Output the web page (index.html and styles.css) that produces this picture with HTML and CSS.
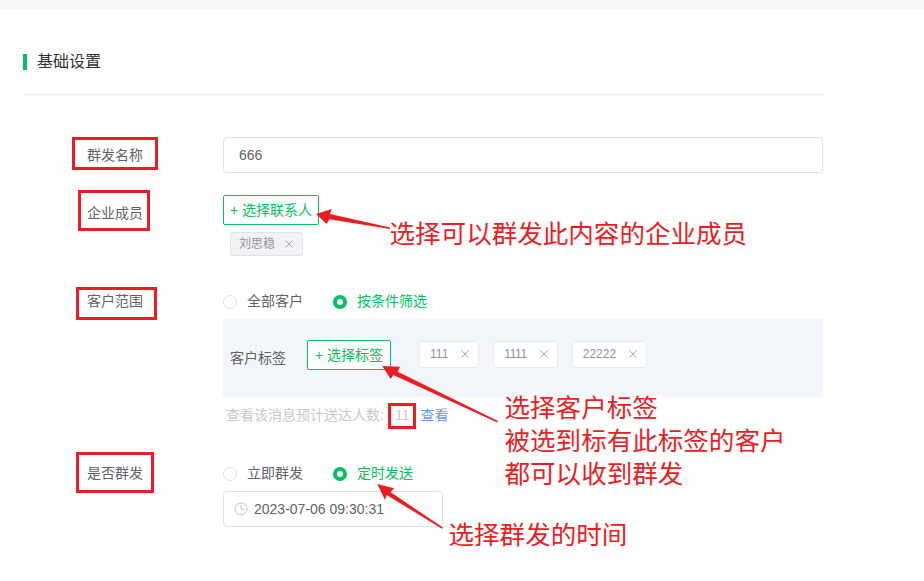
FILE: index.html
```html
<!DOCTYPE html>
<html lang="zh-CN">
<head>
<meta charset="utf-8">
<title>基础设置</title>
<link rel="stylesheet" href="styles.css">
</head>
<body>
<div class="topbar"></div>
<main class="card">
  <h2 class="section-title"><span class="section-text">基础设置</span></h2>
  <form class="form">
    <div class="row">
      <div class="label">群发名称</div>
      <div class="field"><div class="input">666</div></div>
    </div>
    <div class="row row-members">
      <div class="label">企业成员</div>
      <div class="field">
        <button type="button" class="add-btn add-contact">+ 选择联系人</button>
        <div class="member-list">
          <span class="tag tag-member">刘思稳<svg class="close" viewBox="0 0 14 14"><path d="M3.5 3.5l7 7M10.5 3.5l-7 7"/></svg></span>
        </div>
      </div>
    </div>
    <div class="row row-range">
      <div class="label">客户范围</div>
      <div class="field">
        <div class="radios">
          <span class="radio"><i class="dot"></i>全部客户</span>
          <span class="radio on"><i class="dot"></i>按条件筛选</span>
        </div>
        <div class="panel">
          <div class="panel-label">客户标签</div>
          <button type="button" class="add-btn">+ 选择标签</button>
          <div class="tags">
            <span class="tag">111<svg class="close" viewBox="0 0 14 14"><path d="M3.5 3.5l7 7M10.5 3.5l-7 7"/></svg></span>
            <span class="tag tag-tight">1111<svg class="close" viewBox="0 0 14 14"><path d="M3.5 3.5l7 7M10.5 3.5l-7 7"/></svg></span>
            <span class="tag">22222<svg class="close" viewBox="0 0 14 14"><path d="M3.5 3.5l7 7M10.5 3.5l-7 7"/></svg></span>
          </div>
        </div>
        <div class="note">查看该消息预计送达人数:<span class="count">11</span><a class="view">查看</a></div>
      </div>
    </div>
    <div class="row row-send">
      <div class="label">是否群发</div>
      <div class="field">
        <div class="radios">
          <span class="radio"><i class="dot"></i>立即群发</span>
          <span class="radio on"><i class="dot"></i>定时发送</span>
        </div>
        <div class="date">
          <svg class="clock" viewBox="0 0 14 14"><circle cx="7" cy="7" r="6"/><path d="M7 3.2V7.4H10.4"/></svg>2023-07-06 09:30:31
        </div>
      </div>
    </div>
  </form>
</main>

<div class="mark mark-name"></div>
<div class="mark mark-member"></div>
<div class="mark mark-range"></div>
<div class="mark mark-send"></div>
<div class="mark mark-count"></div>

<svg class="arrows" viewBox="0 0 924 581">
  <polygon points="316,214 331.7,209 330,214 390,227.5 390,229 329.3,219.3 326.7,224"/>
  <polygon points="382.3,366 400,366.7 397.7,371.7 498,421 497.3,422.4 393.3,375 390.7,379"/>
  <polygon points="377.3,484 394,488.3 390.7,492.3 443,527.6 442,528.8 386.7,495 385,500"/>
</svg>

<p class="note-red note-member">选择可以群发此内容的企业成员</p>
<p class="note-red note-tag">选择客户标签<br>被选到标有此标签的客户<br>都可以收到群发</p>
<p class="note-red note-time">选择群发的时间</p>
</body>
</html>
```

FILE: styles.css
```css
* { box-sizing: border-box; }
html, body { margin: 0; padding: 0; }
body {
  position: relative;
  width: 924px;
  height: 581px;
  overflow: hidden;
  background: #fff;
  color: #606266;
  font: 14px/20px "Liberation Sans", "Noto Sans CJK SC", sans-serif;
}
.topbar { height: 9px; background: #f7f8fa; }
.card { width: 800px; margin-left: 23px; }
.section-title {
  margin: 45px 0 0;
  padding-bottom: 24px;
  border-bottom: 1px solid #ebedf0;
  font-size: 16px;
  font-weight: 400;
  line-height: 16px;
  color: #323233;
}
.section-text { display: block; padding-left: 10px; border-left: 4px solid #07c160; }
.form { margin-top: 42px; }
.row { display: grid; grid-template-columns: 200px 600px; }
.row-members { margin-top: 22px; }
.row-range { margin-top: 28px; }
.row-send { margin-top: 23px; }
.label { padding-left: 64px; line-height: 36px; }
.row-range .label, .row-send .label { line-height: 34px; }
.input {
  height: 36px;
  padding-left: 15px;
  border: 1px solid #dfe1e8;
  border-radius: 4px;
  line-height: 34px;
}
.add-btn {
  display: block;
  height: 30px;
  padding: 0 7px;
  border: 1px solid #07c160;
  border-radius: 2px;
  background: #fff;
  color: #07c160;
  font: inherit;
  line-height: 28px;
}
.add-contact { padding: 0 6px; }
.member-list { margin: 7px 0 0 7px; display: flex; }
.tag {
  display: flex;
  align-items: center;
  height: 27px;
  padding: 0 6px 2px 10px;
  border: 1px solid #e9ebf0;
  border-radius: 3px;
  background: #fff;
  color: #909399;
  font-size: 12px;
}
.tag-tight { letter-spacing: -0.4px; }
.tag-member {
  height: 24px;
  padding: 0 6px 0 8px;
  background: #f2f3f5;
  border-color: #e1e3e8;
}
.close { width: 14px; height: 14px; margin-left: 10px; }
.close path { fill: none; stroke: #a4a7b0; stroke-width: 1; }
.tag-member .close { margin-left: 7px; }
.radios { display: flex; height: 35px; padding-bottom: 1px; align-items: center; }
.radio { display: flex; align-items: center; width: 110px; }
.dot {
  flex: none;
  width: 14px;
  height: 14px;
  margin: 2px 10px 0 0;
  border: 1px solid #dfe1e8;
  border-radius: 50%;
  background: #fff;
}
.on { color: #07c160; width: auto; }
.on .dot { border: 4.5px solid #07c160; }
.panel {
  display: flex;
  align-items: flex-start;
  height: 78px;
  padding: 21px 0 0 7px;
  background: #f2f5f9;
}
.panel-label { margin-right: 21px; line-height: 36px; }
.tags { display: flex; gap: 14px; margin: 1px 0 0 28px; }
.note { margin-left: 3px; line-height: 36px; color: #c8c9cc; }
.count { margin-left: 11px; }
.view { margin-left: 11px; color: #5c9df8; }
.date {
  display: flex;
  align-items: center;
  width: 220px;
  height: 36px;
  padding-left: 10px;
  border: 1px solid #dfe1e8;
  border-radius: 4px;
}
.clock { width: 14px; height: 14px; margin-right: 6px; }
.clock circle, .clock path { fill: none; stroke: #c0c4cc; stroke-width: 1; }

.mark { position: absolute; border: 3px solid #ed1c24; }
.mark-name { left: 72px; top: 137px; width: 86px; height: 33px; }
.mark-member { left: 78px; top: 190px; width: 72px; height: 41px; }
.mark-range { left: 76px; top: 287px; width: 81px; height: 33px; }
.mark-send { left: 76px; top: 452px; width: 78px; height: 41px; }
.mark-count { left: 388px; top: 403px; width: 28px; height: 26px; }
.arrows { position: absolute; left: 0; top: 0; width: 924px; height: 581px; }
.arrows polygon { fill: #ed1c24; }
.note-red {
  position: absolute;
  margin: 0;
  color: #ed1c24;
  font-family: "Noto Sans CJK SC", sans-serif;
  font-size: 25.55px;
  line-height: 33px;
  white-space: nowrap;
}
.note-member { left: 389.5px; top: 215px; }
.note-tag { left: 504.5px; top: 389px; }
.note-time { left: 448.5px; top: 516px; }
```
